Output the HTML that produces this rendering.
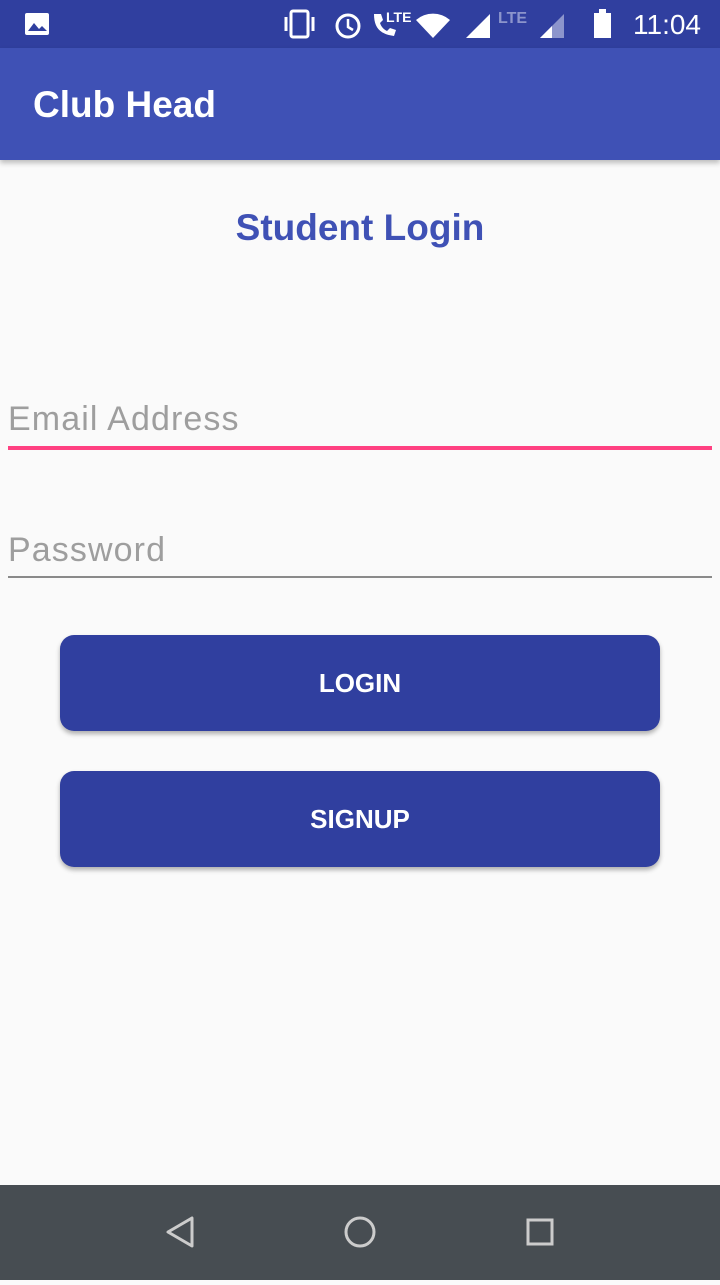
<!DOCTYPE html>
<html><head><style>
body{margin:0;width:720px;height:1280px;background:#fafafa;font-family:"Liberation Sans",sans-serif;position:relative;overflow:hidden}
.sb{position:absolute;top:0;left:0;width:720px;height:48px;background:#303f9f;color:#fff}
.ab{position:absolute;top:48px;left:0;width:720px;height:112px;background:#3f51b5;box-shadow:0 3px 5px rgba(0,0,0,.25)}
.ab span{position:absolute;left:33px;top:36px;font-size:37px;font-weight:bold;color:#fff}
.title{position:absolute;top:207px;width:720px;text-align:center;font-size:37px;font-weight:bold;color:#3f51b5}
.in{position:absolute;left:8px;width:704px;font-size:34px;letter-spacing:1.1px;color:#9e9e9e}
.btn{position:absolute;left:60px;width:600px;height:96px;background:#303f9f;border-radius:14px;color:#fff;font-size:26px;font-weight:bold;text-align:center;line-height:96px;box-shadow:0 3px 5px rgba(0,0,0,.3)}
.nav{position:absolute;top:1185px;left:0;width:720px;height:95px;background:#474d52}
</style></head><body>
<div class="sb">
<svg width="720" height="48" style="position:absolute;left:0;top:0">
<rect x="25" y="13" width="24" height="22" rx="2" fill="#fff"/><path d="M28 31l6-8 5 6 3-3 5 5z" fill="#303f9f"/>
<rect x="291" y="11" width="17" height="26" rx="2" fill="none" stroke="#fff" stroke-width="3"/><path d="M286 17v14M313 17v14" stroke="#fff" stroke-width="3"/>
<circle cx="348" cy="26" r="11" fill="none" stroke="#fff" stroke-width="3"/><path d="M348 19v8l5 3" stroke="#fff" stroke-width="2.5" fill="none"/>
<path d="M374 14c0 14 6 20 20 22l2-6-6-2-3 3c-4-2-6-5-7-8l3-3-2-6z" fill="#fff"/>
<text x="386" y="22" font-size="14" font-weight="bold" fill="#fff" font-family="Liberation Sans">LTE</text>
<path d="M416 20a26 26 0 0 1 34 0l-17 18z" fill="#fff"/>
<path d="M466 38l24-24v24z" fill="#fff"/>
<text x="498" y="23" font-size="16" font-weight="bold" fill="#8c95cc" font-family="Liberation Sans">LTE</text>
<path d="M540 38l24-24v24z" fill="#8c95cc"/><path d="M540 38l12-12v12z" fill="#fff"/>
<rect x="594" y="13" width="17" height="25" fill="#fff"/><rect x="599" y="9" width="7" height="5" fill="#fff"/>
<text x="633" y="34" font-size="28" fill="#fff" font-family="Liberation Sans">11:04</text>
</svg></div>
<div class="ab"><span>Club Head</span></div>
<div class="title">Student Login</div>
<div class="in" style="top:400px">Email Address</div>
<div style="position:absolute;left:8px;top:446px;width:704px;height:4px;background:#ff4081"></div>
<div class="in" style="top:531px">Password</div>
<div style="position:absolute;left:8px;top:576px;width:704px;height:2px;background:#8a8a8a"></div>
<div class="btn" style="top:635px">LOGIN</div>
<div class="btn" style="top:771px">SIGNUP</div>
<div class="nav"><svg width="720" height="95">
<path d="M192 33v28l-24-14z" fill="none" stroke="#ccc" stroke-width="3" stroke-linejoin="round"/>
<circle cx="360" cy="47" r="14" fill="none" stroke="#ccc" stroke-width="3"/>
<rect x="528" y="35" width="24" height="24" fill="none" stroke="#ccc" stroke-width="3"/>
</svg></div>
</body></html>
